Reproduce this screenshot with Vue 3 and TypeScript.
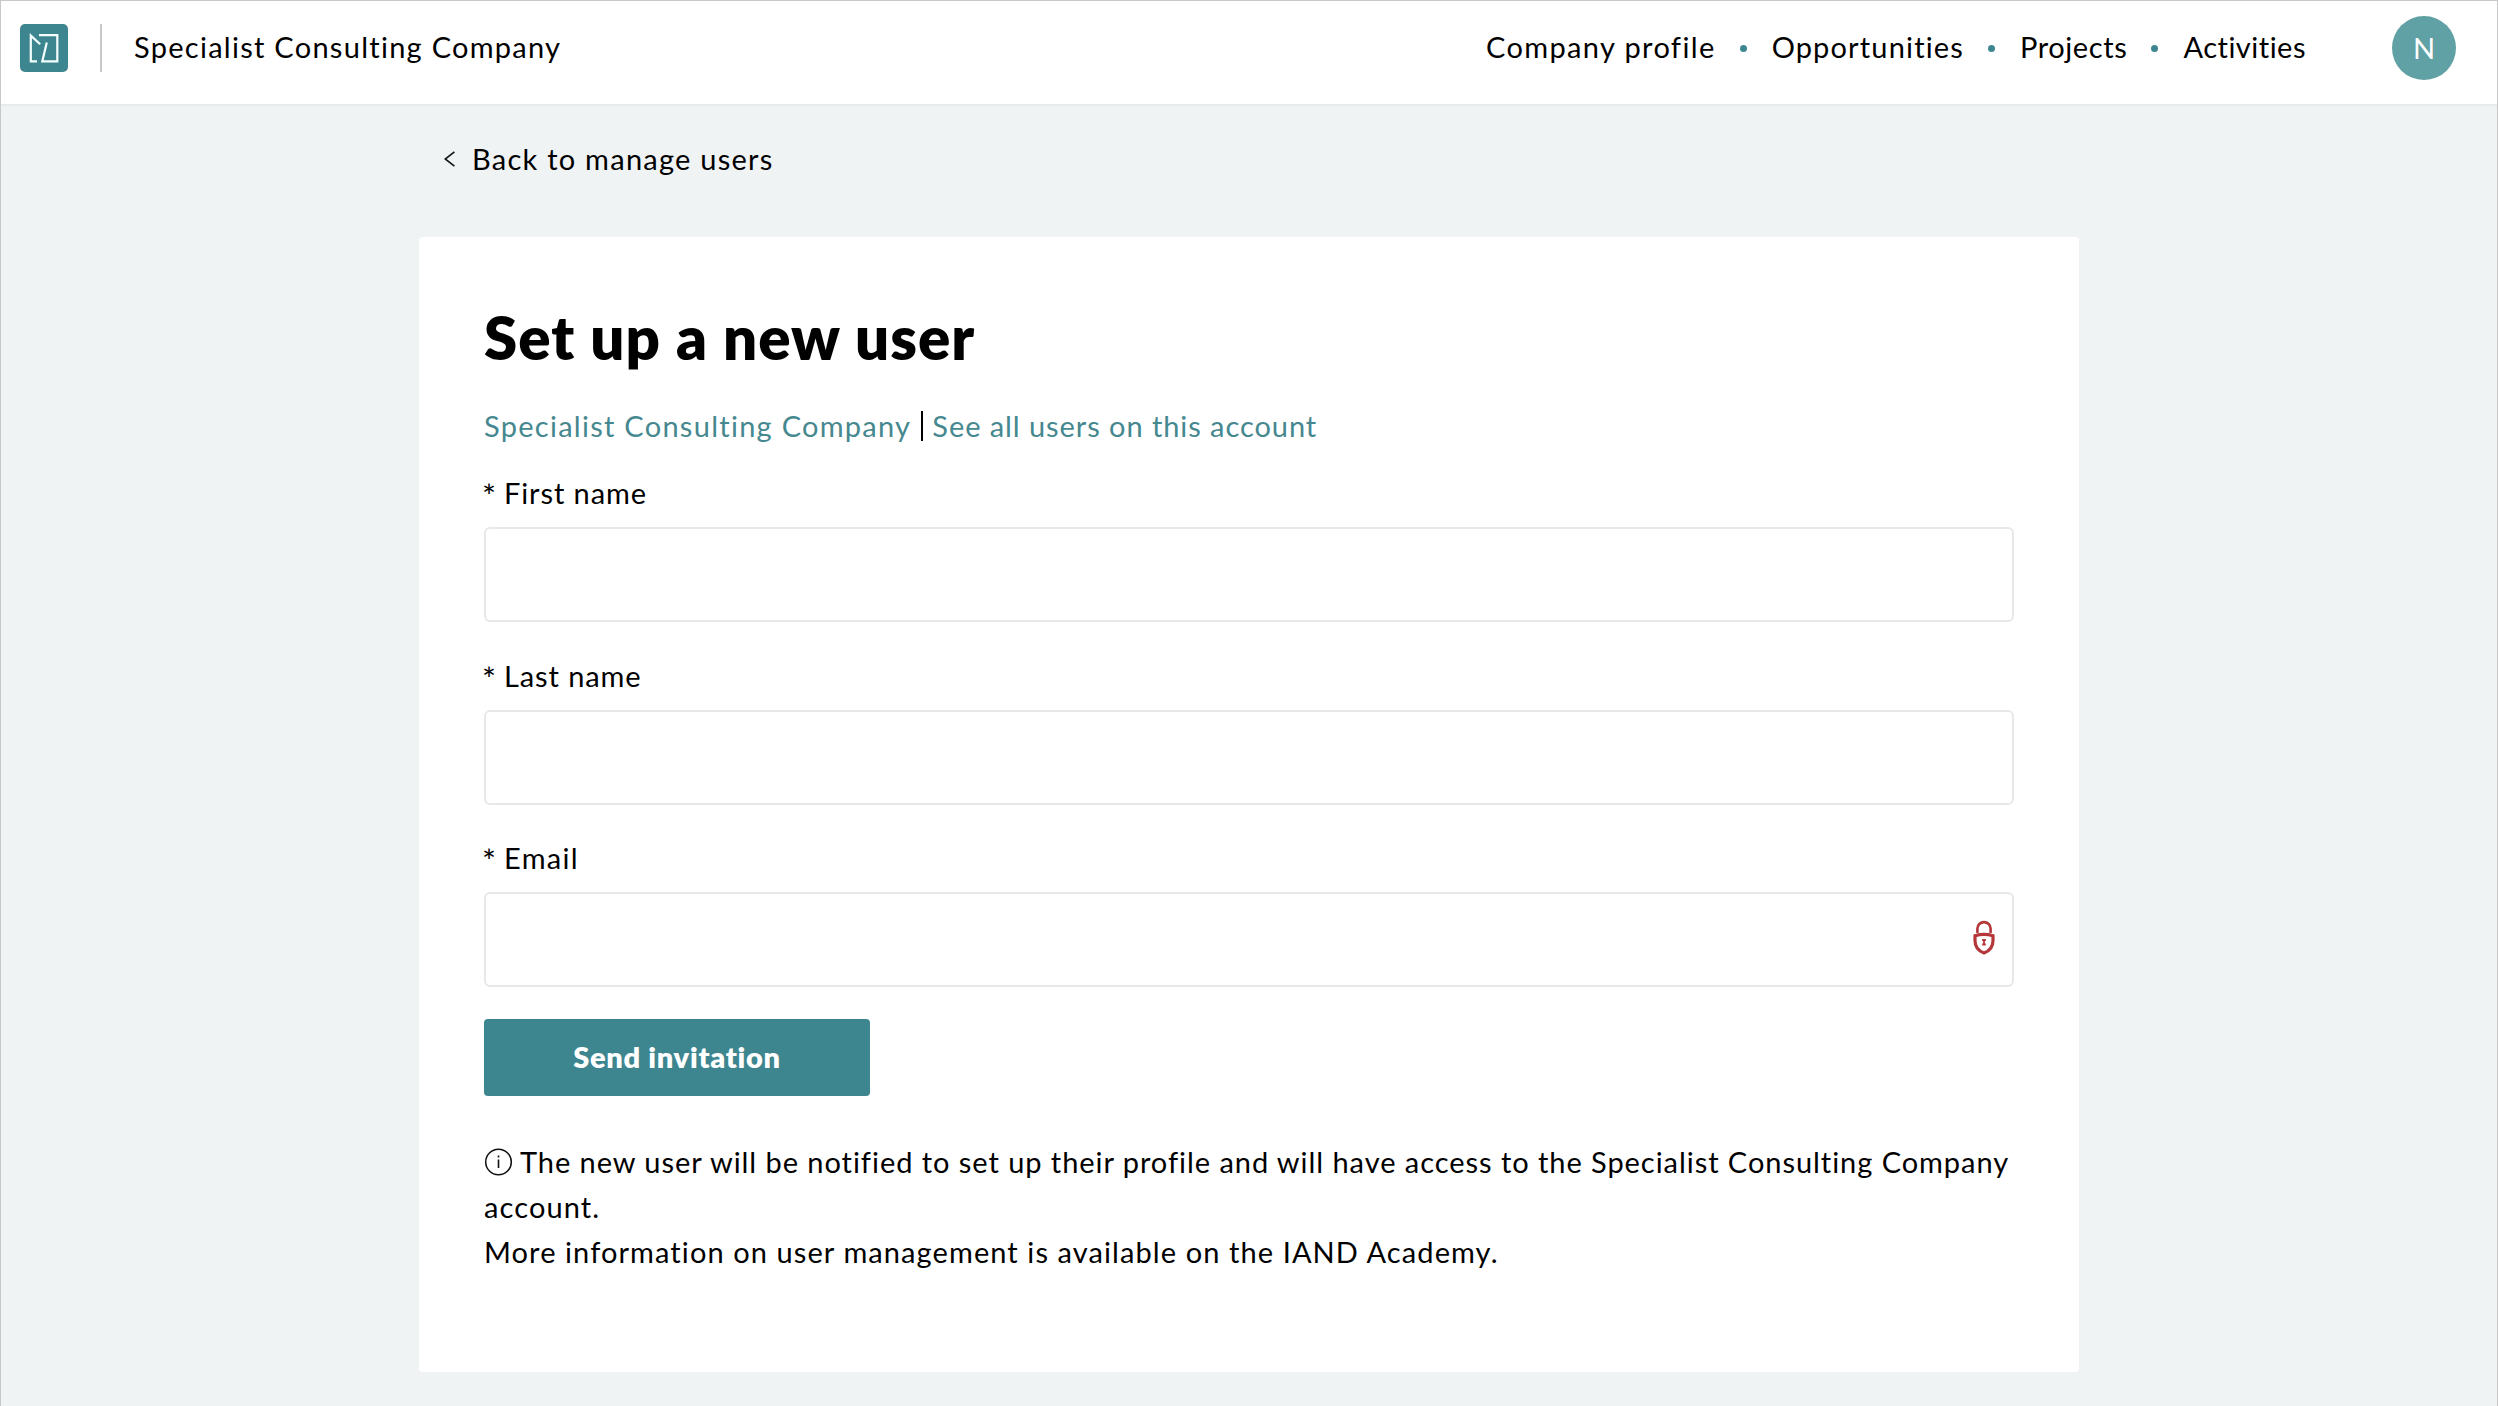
<script setup lang="ts">
interface NavItem { label: string; cls: string }
interface Field { id: string; label: string; secure?: boolean }

const company = 'Specialist Consulting Company'
const nav: NavItem[] = [
  { label: 'Company profile', cls: 'n1' },
  { label: 'Opportunities', cls: 'n2' },
  { label: 'Projects', cls: 'n3' },
  { label: 'Activities', cls: 'n4' },
]
const fields: Field[] = [
  { id: 'first', label: 'First name' },
  { id: 'last', label: 'Last name' },
  { id: 'email', label: 'Email', secure: true },
]
</script>

<template>
  <div class="page">
    <header class="topbar">
      <div class="brand">
        <svg class="logo" width="48" height="48" viewBox="0 0 48 48" fill="none">
          <rect width="48" height="48" rx="5" fill="#3e868f" />
          <path d="M19 11.2H37.3V37.3H22.3L26.8 18.4M20.2 20.2L10.8 11.6V37.3H17" stroke="#f4ffff" stroke-width="2.2" />
        </svg>
        <span class="rule"></span>
        <span class="t company">{{ company }}</span>
      </div>
      <nav class="nav">
        <template v-for="(item, i) in nav" :key="item.label">
          <span v-if="i > 0" class="dot"></span>
          <a class="t" :class="item.cls">{{ item.label }}</a>
        </template>
        <span class="avatar">N</span>
      </nav>
    </header>

    <main class="content">
      <a class="back">
        <svg width="12" height="16" viewBox="0 0 12 16" fill="none">
          <path d="M10.4 .8L1.2 8L10.4 15.2" stroke="#111" stroke-width="1.6" />
        </svg>
        <span class="t backtext">Back to manage users</span>
      </a>

      <section class="card">
        <h1>Set up a new user</h1>
        <p class="links">
          <a class="t company">{{ company }}</a><span class="bar"></span><a class="t l2">See all users on this account</a>
        </p>
        <div v-for="f in fields" :key="f.id" class="field">
          <label :for="f.id"><span class="star">*</span><span class="t" :class="f.id">{{ f.label }}</span></label>
          <div class="box">
            <input :id="f.id" type="text" />
            <svg v-if="f.secure" class="lock" width="22" height="36" viewBox="0 0 22 36" fill="none" stroke="#b5373a">
              <path d="M4.400 13V8.500a6.600 6.400 0 0 1 13.200 0V13" stroke-width="2.600" />
              <path d="M2 15.800Q11 13 20 15.800V20.500C20 26.800 16.500 31 11 33C5.500 31 2 26.800 2 20.500Z" stroke-width="3.200" />
              <path d="M9.200 20h3.600M9.200 24.500h3.600M11 19.500v5" stroke-width="1.800" />
            </svg>
          </div>
        </div>
        <button type="button">Send invitation</button>
        <div class="note">
          <p class="line">
            <svg width="28" height="28" viewBox="0 0 28 28" fill="none" stroke="#111">
              <circle cx="14.500" cy="14" r="12.800" stroke-width="1.500" />
              <path d="M14.500 11.500V20M14.500 7.500v2" stroke-width="1.600" />
            </svg>
            <span class="t i1">The new user will be notified to set up their profile and will have access to the {{ company }}</span>
          </p>
          <p class="i2">account.</p>
          <p class="i3">More information on user management is available on the IAND Academy.</p>
        </div>
      </section>
    </main>
  </div>
</template>

<style>
body { margin: 0; background: #f0f3f4; }
</style>

<style scoped>
* { box-sizing: border-box; }
.page {
  height: 1406px;
  border: 1px solid #c8c8c8;
  border-bottom: 0;
  background: #f0f3f4;
  font-family: Lato, sans-serif;
  font-size: 29px;
  line-height: 45px;
  font-variant-ligatures: none;
  color: #000;
  overflow: hidden;
}
h1, p { margin: 0; }
.t { white-space: pre; }
.company { letter-spacing: 1.27px; }
.n1 { letter-spacing: 1.37px; }
.n2 { letter-spacing: 1.15px; }
.n3 { letter-spacing: 0.6px; }
.n4 { letter-spacing: 0.5px; }
.backtext { letter-spacing: 1.25px; }
.l2 { letter-spacing: 0.93px; }
.i1 { letter-spacing: 0.95px; }
.i2 { letter-spacing: 1.1px; }
.i3 { letter-spacing: 1.09px; }
.topbar {
  height: 105px;
  padding: 0 41px 10px 19px;
  background: #fff;
  border-bottom: 2px solid #e8eaea;
  display: flex;
  align-items: center;
  justify-content: space-between;
}
.brand, .nav { display: flex; align-items: center; }
.brand .t, .nav > .t { margin-bottom: 2px; }
.rule { width: 2px; height: 48px; margin: 0 32px; background: #c8c8c8; }
.dot { width: 7px; height: 7px; border-radius: 50%; margin: 2px 25px 0 24px; background: #3e868f; }
.avatar {
  width: 64px; height: 64px; border-radius: 50%;
  margin-left: 86px; padding-bottom: 1px;
  background: #5fa1a5; color: #fff;
  display: flex; align-items: center; justify-content: center;
}
.content { width: 1660px; margin: 0 auto; }
.back { display: flex; align-items: center; height: 45px; margin: 30px 0 56px; padding-left: 25px; gap: 16px; }
.card { height: 1135px; padding: 64px 65px 0; background: #fff; border-radius: 4px; }
h1 { font-size: 60px; line-height: 72px; font-weight: 800; letter-spacing: 1.05px; white-space: pre; }
.links { display: flex; align-items: center; margin: 30px 0 14px; color: #46888f; }
.bar { width: 2px; height: 30px; margin: 0 9px 0 10px; background: #000; }
.field { margin-bottom: 22.5px; }
label { display: flex; height: 65px; padding-top: 8px; letter-spacing: 0.9px; }
.email { letter-spacing: 1.3px; }
.star { width: 22px; margin-left: -2px; padding-top: 3px; font-size: 33px; letter-spacing: 0; }
.box { position: relative; height: 95px; }
input { display: block; width: 100%; height: 95px; border: 2px solid #e8e8e8; border-radius: 6px; background: #fff; }
.lock { position: absolute; right: 19px; top: 28px; }
button {
  display: block; width: 386px; height: 77px; margin-top: 32px; padding: 0 0 2px; border: 0; border-radius: 4px;
  background: #3e868f; color: #fff; font: 800 29px/45px Lato, sans-serif; letter-spacing: 0.7px;
}
.note { margin-top: 43px; }
.line { display: flex; align-items: center; gap: 8px; }
</style>
